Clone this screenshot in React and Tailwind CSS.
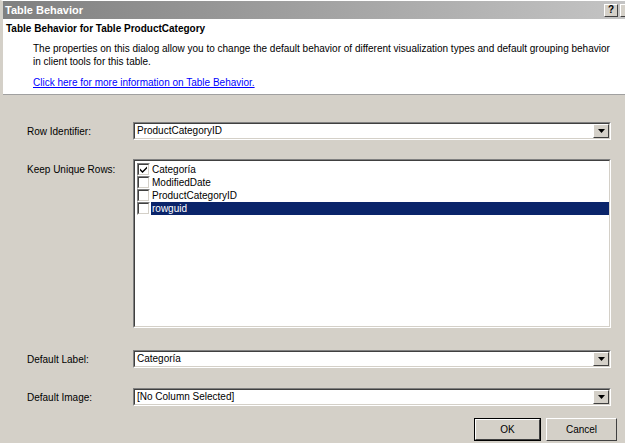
const font = { fontFamily: '"Liberation Sans", Arial, sans-serif' }

function ArrowButton() {
  return (
    <div className="w-[16px] h-full bg-[#d4d0c8] border border-t-white border-l-white border-r-[#404040] border-b-[#404040] flex items-center justify-center">
      <svg width="7" height="4" viewBox="0 0 7 4">
        <path d="M0 0h7L3.5 4z" fill="#000" />
      </svg>
    </div>
  )
}

function Sunken({ className = '', children }) {
  return (
    <div className={`border border-t-[#808080] border-l-[#808080] border-r-white border-b-white ${className}`}>
      <div className="w-full h-full border border-t-[#404040] border-l-[#404040] border-r-[#d4d0c8] border-b-[#d4d0c8] bg-white">
        {children}
      </div>
    </div>
  )
}

function Combo({ value }) {
  return (
    <Sunken className="flex-1 h-[18px]">
      <div className="flex h-full items-stretch">
        <div className="flex-1 pl-[2px] text-[10px] leading-[14px] text-black">{value}</div>
        <ArrowButton />
      </div>
    </Sunken>
  )
}

function Check({ checked }) {
  return (
    <div className="w-[13px] h-[13px] border border-t-[#808080] border-l-[#808080] border-r-white border-b-white">
      <div className="w-full h-full border border-t-[#404040] border-l-[#404040] border-r-[#d4d0c8] border-b-[#d4d0c8] bg-white flex items-center justify-center">
        {checked && (
          <svg width="7" height="7" viewBox="0 0 7 7">
            <path d="M0 2.5l2.5 2.5L7 0.5V2.5L2.5 7L0 4.5z" fill="#000" />
          </svg>
        )}
      </div>
    </div>
  )
}

const rows = [
  { name: 'Categoría', checked: true },
  { name: 'ModifiedDate' },
  { name: 'ProductCategoryID' },
  { name: 'rowguid', selected: true },
]

function Button({ children, def, w }) {
  return (
    <div className={`${w} h-[23px] ${def ? 'border border-black' : ''}`}>
      <div className="w-full h-full bg-[#d4d0c8] border border-t-white border-l-white border-r-[#404040] border-b-[#404040] flex items-center justify-center text-[10px] text-black">
        {children}
      </div>
    </div>
  )
}

export default function App() {
  return (
    <div style={font} className="w-[625px] h-[443px] bg-[#d4d0c8] overflow-hidden flex flex-col border-l-[3px] border-l-[#d4d0c8] border-t border-t-white">
      {/* title bar */}
      <div className="h-[18px] flex items-center bg-gradient-to-r from-[#808080] to-[#c4c4c4] pl-[2px] pr-0">
        <span className="flex-1 text-white font-bold text-[11px]">Table Behavior</span>
        <div className="w-[14px] h-[13px] bg-[#d4d0c8] border border-t-white border-l-white border-r-[#404040] border-b-[#404040] flex items-center justify-center text-[10px] font-bold leading-none text-black">?</div>
        <div className="w-[5px] h-[13px] ml-[2px] bg-[#d4d0c8] border border-t-white border-l-white border-r-0 border-b-[#404040]" />
      </div>

      {/* header */}
      <div className="h-[76px] bg-white border-b border-b-[#a0a0a0] pt-[3px] text-[10px] leading-[13px] text-black">
        <div className="pl-[3px] font-bold">Table Behavior for Table ProductCategory</div>
        <div className="pl-[30px] mt-[7px] pr-[12px]">
          The properties on this dialog allow you to change the default behavior of different visualization types and default grouping behavior in client tools for this table.
        </div>
        <div className="pl-[30px] mt-[8px] text-[#0000ff] underline">Click here for more information on Table Behavior.</div>
      </div>

      {/* body */}
      <div className="flex-1 flex flex-col pl-[24px] pr-[14px] pt-[27px] text-[10px] text-black">
        <div className="flex items-center">
          <div className="w-[106px]">Row Identifier:</div>
          <Combo value="ProductCategoryID" />
        </div>

        <div className="flex items-start mt-[19px]">
          <div className="w-[106px] pt-[3px]">Keep Unique Rows:</div>
          <Sunken className="flex-1 h-[169px]">
            <div className="pt-[2px] pl-[2px] text-[10px]">
              {rows.map(r => (
                <div key={r.name} className="flex items-center h-[13px]">
                  <Check checked={r.checked} />
                  <div className={`flex-1 ml-[1px] pl-[1px] h-[13px] leading-[13px] ${r.selected ? 'bg-[#0a246a] text-white' : ''}`}>{r.name}</div>
                </div>
              ))}
            </div>
          </Sunken>
        </div>

        <div className="flex items-center mt-[22px]">
          <div className="w-[106px]">Default Label:</div>
          <Combo value="Categoría" />
        </div>

        <div className="flex items-center mt-[20px]">
          <div className="w-[106px]">Default Image:</div>
          <Combo value="[No Column Selected]" />
        </div>

        <div className="flex justify-end gap-[5px] mt-[12px] -mr-[6px]">
          <Button def w="w-[67px]">OK</Button>
          <Button w="w-[71px]">Cancel</Button>
        </div>
      </div>
    </div>
  )
}
